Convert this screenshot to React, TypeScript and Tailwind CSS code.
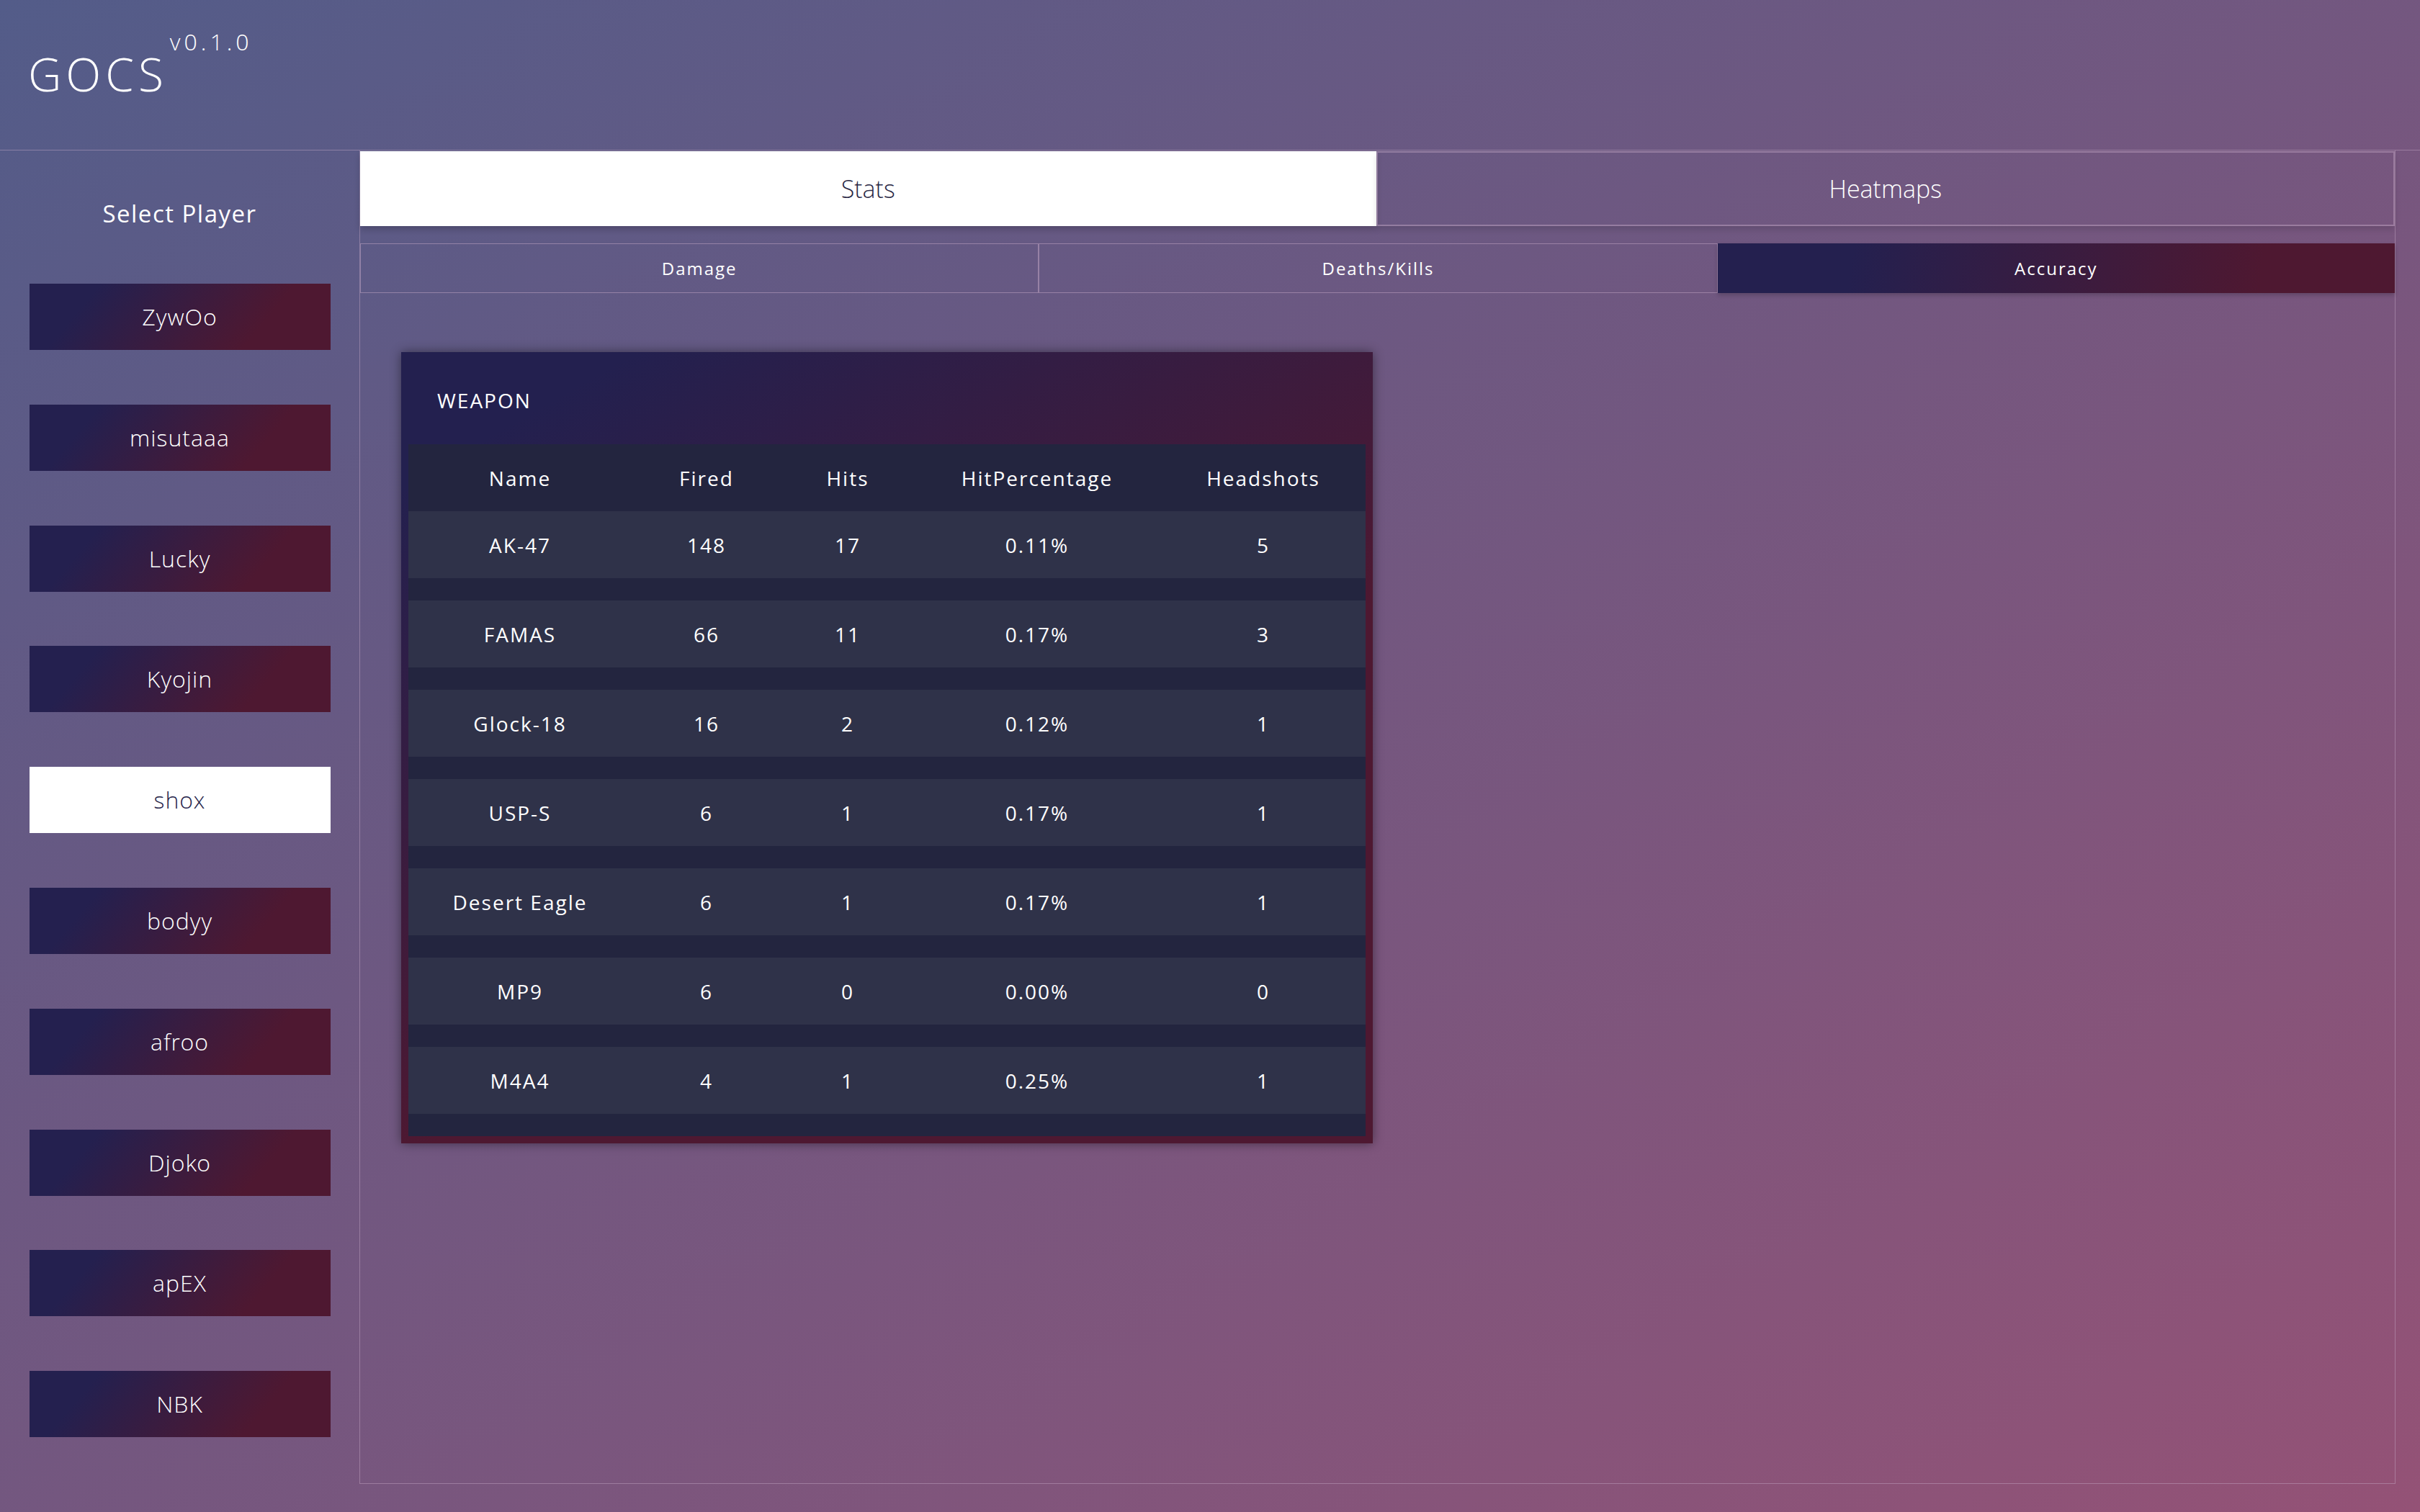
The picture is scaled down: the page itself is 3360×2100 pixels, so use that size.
import React from "react";

const players = ["ZywOo", "misutaaa", "Lucky", "Kyojin", "shox", "bodyy", "afroo", "Djoko", "apEX", "NBK"];

const rows: [string, string, string, string, string][] = [
  ["AK-47", "148", "17", "0.11%", "5"],
  ["FAMAS", "66", "11", "0.17%", "3"],
  ["Glock-18", "16", "2", "0.12%", "1"],
  ["USP-S", "6", "1", "0.17%", "1"],
  ["Desert Eagle", "6", "1", "0.17%", "1"],
  ["MP9", "6", "0", "0.00%", "0"],
  ["M4A4", "4", "1", "0.25%", "1"],
];

const headers = ["Name", "Fired", "Hits", "HitPercentage", "Headshots"];

export default function App() {
  return (
    <div className="w-[3360px] h-[2100px] overflow-hidden bg-[linear-gradient(to_bottom_right,#535c89,#945276)] font-['Open_Sans','Noto_Sans',sans-serif] text-white">
      {/* Header */}
      <header className="h-[209px] border-b border-[rgba(200,170,200,0.45)] flex items-start pl-[39px]">
        <span className="mt-[71px] text-[64px] leading-[64px] font-['Open_Sans_Light','Open_Sans',sans-serif] font-light tracking-[6px]">GOCS</span>
        <span className="mt-[42px] ml-[3px] text-[32px] leading-[32px] font-['Open_Sans_Light','Open_Sans',sans-serif] font-light tracking-[5px]">v0.1.0</span>
      </header>

      <div className="flex">
        {/* Sidebar */}
        <aside className="w-[499px] flex flex-col items-center pt-[68px]">
          <h3 className="text-[33px] leading-[40px] tracking-[1.5px] font-normal">Select Player</h3>
          <div className="mt-[77px] flex flex-col gap-[75.8px]">
            {players.map((p) =>
              p === "shox" ? (
                <button
                  key={p}
                  className="w-[418px] h-[92px] bg-white text-[#26244a] text-[32px] font-['Open_Sans_Light','Open_Sans',sans-serif] font-light tracking-[1px] flex items-center justify-center"
                >
                  {p}
                </button>
              ) : (
                <button
                  key={p}
                  className="w-[418px] h-[92px] bg-[linear-gradient(130deg,#24204f_20%,#4e1831_75%)] text-white text-[32px] font-['Open_Sans_Light','Open_Sans',sans-serif] font-light tracking-[1px] flex items-center justify-center"
                >
                  {p}
                </button>
              )
            )}
          </div>
        </aside>

        {/* Main box */}
        <main className="w-[2827px] h-[1852px] border-x border-b border-[rgba(200,170,200,0.45)] pt-px flex flex-col">
          {/* Tabs */}
          <div className="flex h-[104px]">
            <div className="flex-1 bg-white text-[#2a2845] text-[34px] font-['Open_Sans_Light','Open_Sans',sans-serif] font-light flex items-center justify-center shadow-[0_5px_8px_rgba(0,0,0,0.18)]">
              Stats
            </div>
            <div className="flex-1 border-2 border-[rgba(200,170,200,0.45)] text-[34px] font-['Open_Sans_Light','Open_Sans',sans-serif] font-light flex items-center justify-center shadow-[0_5px_8px_rgba(0,0,0,0.12)]">
              Heatmaps
            </div>
          </div>

          {/* Sub tabs */}
          <div className="flex h-[69px] mt-[24px]">
            <div className="flex-1 border border-[rgba(200,170,200,0.5)] text-[24px] tracking-[2px] flex items-center justify-center">
              Damage
            </div>
            <div className="flex-1 border border-[rgba(200,170,200,0.5)] text-[24px] tracking-[2px] flex items-center justify-center">
              Deaths/Kills
            </div>
            <div className="flex-1 bg-[linear-gradient(100deg,#24204f_20%,#4e1831_80%)] text-[24px] tracking-[2px] flex items-center justify-center shadow-[0_3px_6px_rgba(0,0,0,0.2)]">
              Accuracy
            </div>
          </div>

          {/* Card */}
          <div className="ml-[57px] mt-[82px] w-[1349px] bg-[linear-gradient(150deg,#23204f_10%,#4e1831_60%)] shadow-[0_0_14px_rgba(0,0,0,0.45)] pb-[10px]">
            <div className="h-[128px] flex items-center pl-[50px] pt-[6px] text-[28px] tracking-[2px]">WEAPON</div>
            <div className="mx-[10px] bg-[#23253f] flex flex-col pb-[31px] gap-[31px]">
              <div className="grid grid-cols-[310px_208px_184px_342px_286px] h-[93px] -mb-[31px] items-center text-center text-[28px] tracking-[2px]">
                {headers.map((h) => (
                  <div key={h}>{h}</div>
                ))}
              </div>
              {rows.map((r) => (
                <div
                  key={r[0]}
                  className="grid grid-cols-[310px_208px_184px_342px_286px] h-[93px] items-center text-center text-[28px] tracking-[2px] bg-[#2f3249]"
                >
                  {r.map((c, i) => (
                    <div key={i}>{c}</div>
                  ))}
                </div>
              ))}
            </div>
          </div>
        </main>
      </div>
    </div>
  );
}
